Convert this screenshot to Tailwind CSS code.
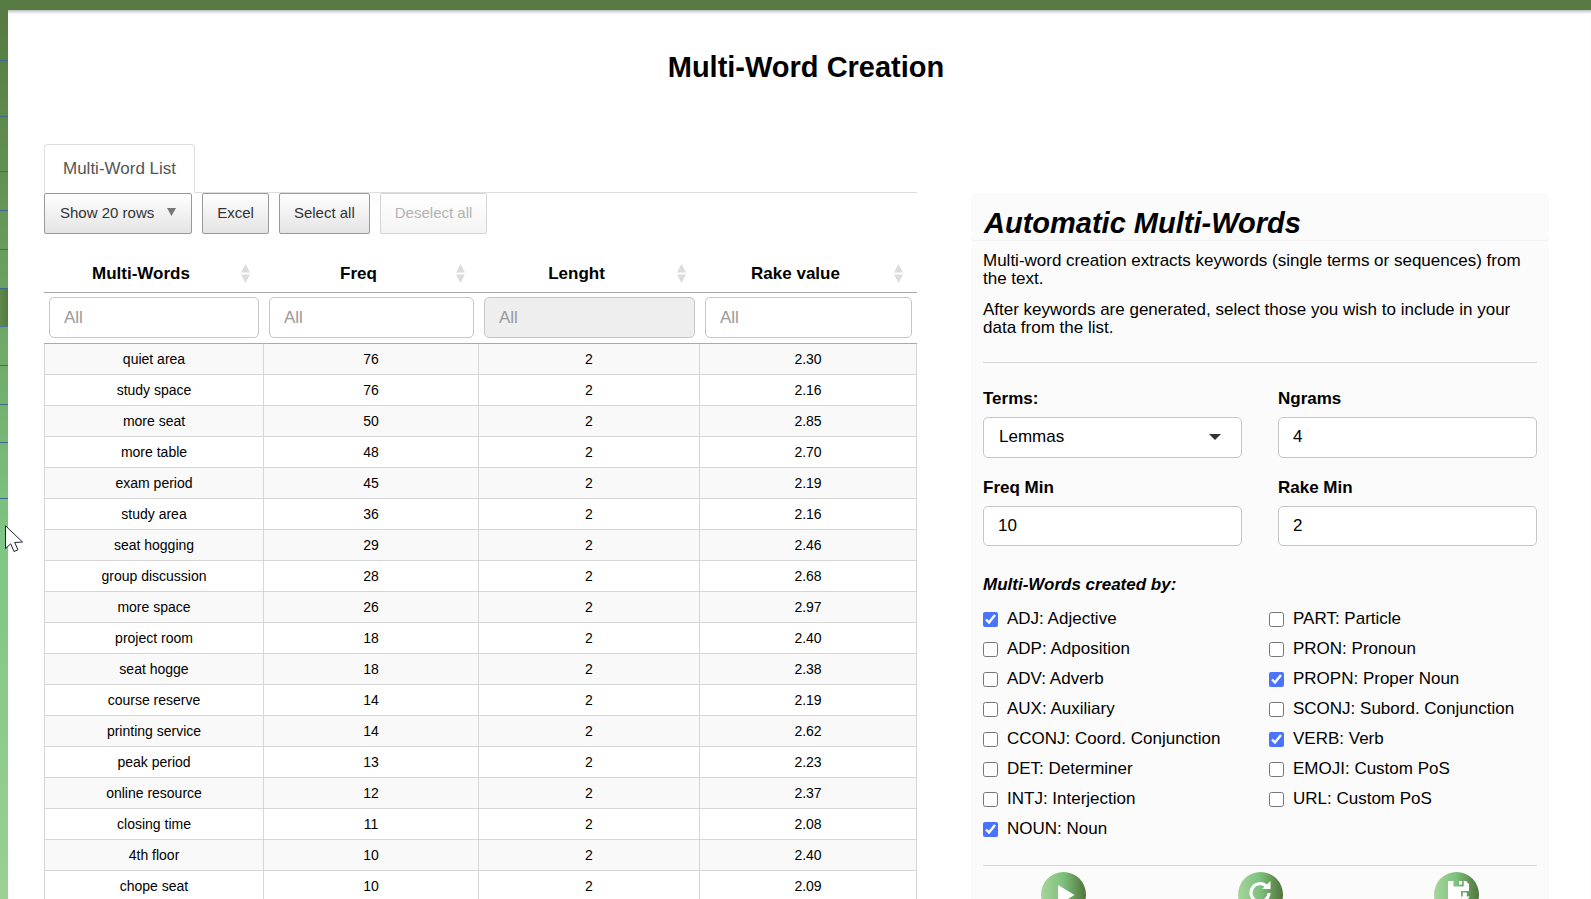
<!DOCTYPE html>
<html lang="en">
<head>
<meta charset="utf-8">
<title>Multi-Word Creation</title>
<script src="https://cdn.jsdelivr.net/npm/@tailwindcss/browser@4"></script>
</head>
<body class="h-screen overflow-hidden bg-white font-['Liberation_Sans',Arial,sans-serif] text-[17px] text-black">
<div class="flex h-full flex-col">
  <header class="h-[10px] shrink-0 bg-[#567a41]"></header>
  <div class="flex min-h-0 flex-1">
    <nav aria-label="Sections" class="w-2 shrink-0 bg-linear-to-b from-[#567a41] via-[#7fc583] via-60% to-[#9ad094]">
      <a href="#s1" aria-label="Section 1" class="block h-[51px] border-b border-[#3b6a8c]"></a>
      <a href="#s2" aria-label="Section 2" class="block h-[56px] border-b border-[#3b6a8c]"></a>
      <a href="#s3" aria-label="Section 3" class="block h-[55px] border-b border-[#3b6a8c]"></a>
      <a href="#s4" aria-label="Section 4" class="block h-[39px] border-b border-[#3b6a8c]"></a>
      <a href="#s5" aria-label="Section 5" class="block h-[39px] border-b border-[#3b6a8c]"></a>
      <a href="#s6" aria-label="Section 6" class="block h-[39px] border-b border-[#3b6a8c]"></a>
      <a href="#s7" aria-label="Section 7" class="block h-[38px] border-b border-[#4a7a9c] bg-linear-to-r from-[#5f8a4b] to-[#557840]"></a>
      <a href="#s8" aria-label="Section 8" class="block h-[39px] border-b border-[#3b6a8c]"></a>
      <a href="#s9" aria-label="Section 9" class="block h-[39px] border-b border-[#3b6a8c]"></a>
      <a href="#s10" aria-label="Section 10" class="block h-[38px] border-b border-[#3b6a8c]"></a>
      <a href="#s11" aria-label="Section 11" class="block h-[56px] border-b border-[#3b6a8c]"></a>
    </nav>

    <main class="min-w-0 flex-1 overflow-hidden pl-9 shadow-[inset_0_4px_3px_-2px_rgba(0,0,0,0.25)]">
      <h1 class="mt-[39px] mr-[23px] text-center text-[29px] leading-9 font-bold">Multi-Word Creation</h1>

      <div class="mt-[59px] mr-[42px] grid grid-cols-[873fr_578fr] gap-x-[54px]">
        <section>
          <div role="tablist" class="flex h-[49px] border-b border-[#ddd]">
            <button role="tab" aria-selected="true" class="-mb-px rounded-t border border-b-0 border-[#ddd] bg-white px-[18px] text-[#555]">Multi-Word List</button>
          </div>

          <div class="flex text-[15px] text-[#333]">
            <button class="mr-[10px] flex h-[41px] items-center rounded-xs border border-[#999] bg-linear-to-b from-white to-[#e4e4e4] px-[15px]">Show 20 rows
              <svg class="mb-1 ml-[13px] h-2 w-[9px]" viewBox="0 0 9 8" fill="#777"><path d="M0 0h9L4.500 8z"/></svg>
            </button>
            <button class="mr-[10px] h-[41px] rounded-xs border border-[#999] bg-linear-to-b from-white to-[#e4e4e4] px-[14px]">Excel</button>
            <button class="mr-[10px] h-[41px] rounded-xs border border-[#999] bg-linear-to-b from-white to-[#e4e4e4] px-[14px]">Select all</button>
            <button disabled class="h-[41px] rounded-xs border border-[#d5d5d5] bg-linear-to-b from-white to-[#f4f4f4] px-[14px] text-[#b3b3b3]">Deselect all</button>
          </div>

          <table class="mt-[22px] w-full table-fixed border-separate border-spacing-0">
            <colgroup><col class="w-[220px]"><col class="w-[215px]"><col class="w-[221px]"><col class="w-[217px]"></colgroup>
            <thead id="head"></thead>
            <tbody id="rows" class="text-center text-sm"></tbody>
          </table>
        </section>

        <aside class="mt-[49px] h-[720px] rounded-t bg-[#fbfbfb]">
          <h2 class="h-12 rounded border-b border-[#f3f3f3] px-[13px] pt-3 text-[29px] leading-9 font-bold italic">Automatic Multi-Words</h2>
          <div class="px-3">
            <p class="mt-[11px] leading-[18px]">Multi-word creation extracts keywords (single terms or sequences) from the text.</p>
            <p class="mt-[13px] leading-[18px]">After keywords are generated, select those you wish to include in your data from the list.</p>
            <hr class="mt-[25px] border-[#d5d5d5]">

            <div class="mt-[27px] grid grid-cols-2 gap-x-9 gap-y-[21px] leading-[18px]">
              <div>
                <label for="terms" class="mb-[9px] block font-bold">Terms:</label>
                <div class="relative">
                  <select id="terms" class="block h-[41px] w-full appearance-none rounded-[5px] border border-[#c6c6c6] bg-white px-[15px] pb-0.5"><option>Lemmas</option></select>
                  <svg class="pointer-events-none absolute top-[17px] right-[21px] h-1.5 w-3" viewBox="0 0 12 6" fill="#333"><path d="M0 0h12L6 6z"/></svg>
                </div>
              </div>
              <div>
                <label for="ngrams" class="mb-[9px] block font-bold">Ngrams</label>
                <input id="ngrams" type="text" value="4" class="block h-[41px] w-full rounded-[5px] border border-[#c6c6c6] bg-white px-[14px] pb-0.5">
              </div>
              <div>
                <label for="freq" class="mb-[9px] block font-bold">Freq Min</label>
                <input id="freq" type="text" value="10" class="block h-10 w-full rounded-[5px] border border-[#c6c6c6] bg-white px-[14px]">
              </div>
              <div>
                <label for="rake" class="mb-[9px] block font-bold">Rake Min</label>
                <input id="rake" type="text" value="2" class="block h-10 w-full rounded-[5px] border border-[#c6c6c6] bg-white px-[14px]">
              </div>
            </div>

            <fieldset class="mt-[30px]">
              <legend class="leading-[18px] font-bold italic">Multi-Words created by:</legend>
              <div id="tags" class="mt-[10px] grid grid-flow-col grid-cols-[286fr_268fr] grid-rows-8"></div>
            </fieldset>
            <hr class="mt-[21px] border-[#d5d5d5]">

            <div class="mt-1.5 flex justify-between px-[58px]">
              <button aria-label="Run" class="flex size-[45px] items-center justify-center rounded-full bg-linear-to-r from-[#a5d69b] via-[#7cc07d] to-[#50743a]">
                <svg class="ml-1 h-5 w-[18px]" viewBox="0 0 18 20" fill="#fff"><path d="M1 0L17.500 10 1 20z"/></svg>
              </button>
              <button aria-label="Reset" class="flex size-[45px] items-center justify-center rounded-full bg-linear-to-r from-[#a5d69b] via-[#7cc07d] to-[#50743a]">
                <svg class="mb-1.5 size-[22px]" viewBox="0 0 22 22" fill="none"><path d="M17.500 5.500A9 9 0 1 0 20 12" stroke="#fff" stroke-width="3.200"/><path d="M21.500 0v8h-8.500z" fill="#fff"/></svg>
              </button>
              <button aria-label="Save" class="flex size-[45px] items-center justify-center rounded-full bg-linear-to-r from-[#a5d69b] via-[#7cc07d] to-[#50743a]">
                <svg class="mb-1.5 ml-1 size-[22px]" viewBox="0 0 22 22"><path fill="#fff" d="M0 0h5.500v5.500h10.200V0H18l3 3v7h-8v10H0z"/><path fill="#fff" d="M11 0h3v3.500h-3zM14.800 11.500h4v4h3L16.800 21.500l-5-6h3z"/></svg>
              </button>
            </div>
          </div>
        </aside>
      </div>
    </main>
  </div>
</div>

<!-- mouse pointer -->
<svg class="pointer-events-none absolute top-[525px] left-[5px] h-[28px] w-[19px]" viewBox="0 0 19 28"><path d="M.5.800v22.700l5.200-4.700 3.300 7.700 4-1.700-3.300-7.300 7.800-.5z" fill="#fff" stroke="#223" stroke-width="1"/></svg>

<script>
const cols = ['Multi-Words', 'Freq', 'Lenght', 'Rake value'];
const sort = '<svg class="mr-[14px] ml-[13px] h-[19px] w-[9px] shrink-0" viewBox="0 0 9 19" fill="#dcdcdc"><path d="M4.500 0L9 8.500H0zM0 10.500h9L4.500 19z"/></svg>';
document.getElementById('head').innerHTML =
  '<tr>' + cols.map(c => `<th class="h-[37px] border-b border-[#aaa] p-0 pb-0.5"><button class="flex w-full items-center pl-[10px] leading-5 font-bold"><span class="flex-1 pt-0.5">${c}</span>${sort}</button></th>`).join('') + '</tr>' +
  '<tr>' + cols.map((c, i) => `<td class="border-b border-[#aaa] px-[5px] pt-1 pb-[5px]"><input type="search" placeholder="All" aria-label="Filter ${c}" ${i === 2 ? 'disabled' : ''} class="block h-[41px] w-full rounded-[5px] border border-[#c6c6c6] bg-white px-[14px] placeholder:text-[#999] disabled:bg-[#eee]"></td>`).join('') + '</tr>';
const data = [['quiet area',76,'2.30'],['study space',76,'2.16'],['more seat',50,'2.85'],['more table',48,'2.70'],['exam period',45,'2.19'],['study area',36,'2.16'],['seat hogging',29,'2.46'],['group discussion',28,'2.68'],['more space',26,'2.97'],['project room',18,'2.40'],['seat hogge',18,'2.38'],['course reserve',14,'2.19'],['printing service',14,'2.62'],['peak period',13,'2.23'],['online resource',12,'2.37'],['closing time',11,'2.08'],['4th floor',10,'2.40'],['chope seat',10,'2.09']];
document.getElementById('rows').innerHTML = data.map(([w, f, r]) =>
  '<tr class="odd:bg-[#f9f9f9]">' + [w, f, 2, r].map(v => `<td class="h-[31px] border-r border-b border-[#d6d6d6] p-0 first:border-l">${v}</td>`).join('') + '</tr>').join('');
const tags = ['ADJ: Adjective*','ADP: Adposition','ADV: Adverb','AUX: Auxiliary','CCONJ: Coord. Conjunction','DET: Determiner','INTJ: Interjection','NOUN: Noun*','PART: Particle','PRON: Pronoun','PROPN: Proper Noun*','SCONJ: Subord. Conjunction','VERB: Verb*','EMOJI: Custom PoS','URL: Custom PoS'];
document.getElementById('tags').innerHTML = tags.map(t =>
  `<label class="flex h-[30px] items-center gap-[9px] whitespace-nowrap"><input type="checkbox" ${t.endsWith('*') ? 'checked' : ''} class="size-[15px] shrink-0 accent-[#4a74ff]">${t.replace('*', '')}</label>`).join('');
</script>
</body>
</html>
